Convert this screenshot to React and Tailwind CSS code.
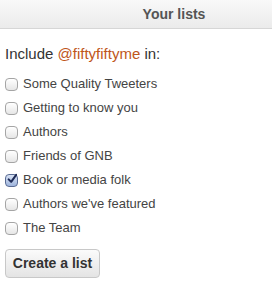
import { useState } from "react";

const lists = [
    { name: "Some Quality Tweeters", checked: false },
    { name: "Getting to know you", checked: false },
    { name: "Authors", checked: false },
    { name: "Friends of GNB", checked: false },
    { name: "Book or media folk", checked: true },
    { name: "Authors we've featured", checked: false },
    { name: "The Team", checked: false },
];

const App = () => {
    const [items, setItems] = useState(lists);

    const toggle = (index) => {
        setItems(items.map((item, i) => (i === index ? { ...item, checked: !item.checked } : item)));
    };

    return (
        <div className="w-[272px] h-[286px] bg-white overflow-hidden font-['Liberation_Sans',Arial,sans-serif]">
            {/* header */}
            <div className="h-[29px] flex items-center justify-center pl-[76px] bg-gradient-to-b from-[#f9f9f9] to-[#ebebeb] border-b border-[#d6d6d6]">
                <h2 className="text-[14px] font-bold text-[#555]">Your lists</h2>
            </div>

            <div className="px-[5px] pt-[16px]">
                <p className="text-[15px] text-[#333] leading-[18px] mb-[9px]">
                    Include <span className="text-[#c0561a]">@fiftyfiftyme</span> in:
                </p>

                <ul>
                    {items.map((item, index) => (
                        <li key={index} className="h-[24px] flex items-center">
                            <label className="flex items-center gap-[5px] cursor-pointer">
                                <span
                                    onClick={() => toggle(index)}
                                    className={`w-[13px] h-[13px] rounded-[4px] border flex items-center justify-center ${
                                        item.checked
                                            ? "border-[#5a6c94] bg-gradient-to-b from-[#d8e2f4] to-[#9fb5dd]"
                                            : "border-[#a5a5a5] bg-gradient-to-b from-[#ffffff] to-[#e6e6e6]"
                                    }`}
                                >
                                    {item.checked && (
                                        <svg width="12" height="12" viewBox="0 0 12 12" className="-mt-[2px] ml-[1px]">
                                            <path d="M2 6.5 L5 9.5 L11 1" stroke="#1d2a55" strokeWidth="2.4" fill="none" strokeLinecap="round" strokeLinejoin="round" />
                                        </svg>
                                    )}
                                </span>
                                <span className="text-[13px] text-[#444]">{item.name}</span>
                            </label>
                        </li>
                    ))}
                </ul>

                <button className="mt-[9px] h-[29px] w-[95px] rounded-[4px] border border-[#c8c8c8] bg-gradient-to-b from-[#fbfbfb] to-[#e4e4e4] text-[14px] font-bold text-[#333]">
                    Create a list
                </button>
            </div>
        </div>
    );
};

export default App;
